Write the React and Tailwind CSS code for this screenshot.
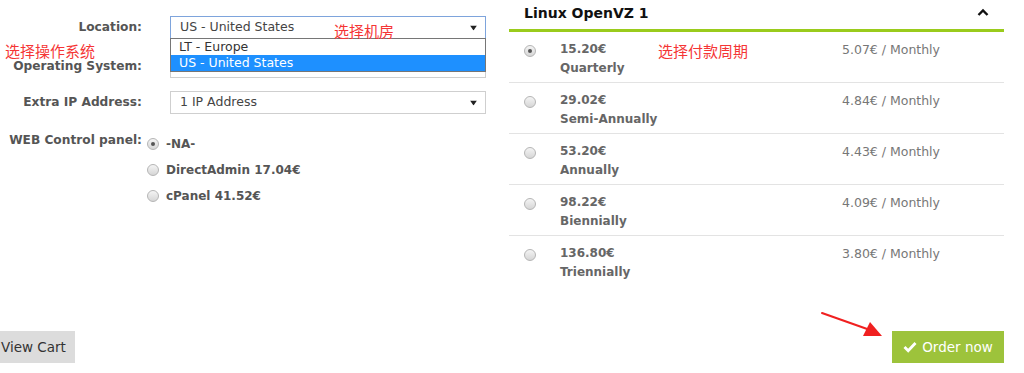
import React from 'react';

const cycles = [
  { price: '15.20€', name: 'Quarterly', monthly: '5.07€ / Monthly', checked: true },
  { price: '29.02€', name: 'Semi-Annually', monthly: '4.84€ / Monthly' },
  { price: '53.20€', name: 'Annually', monthly: '4.43€ / Monthly' },
  { price: '98.22€', name: 'Biennially', monthly: '4.09€ / Monthly' },
  { price: '136.80€', name: 'Triennially', monthly: '3.80€ / Monthly' },
];

const panels = [
  { label: '-NA-', checked: true },
  { label: 'DirectAdmin 17.04€' },
  { label: 'cPanel 41.52€' },
];

function Radio({ checked }) {
  return (
    <span className="flex items-center justify-center w-[12px] h-[12px] rounded-full border border-[#b5b5b5] bg-gradient-to-b from-[#f4f4f4] to-[#d6d6d6] shrink-0">
      {checked && <span className="w-[4px] h-[4px] rounded-full bg-[#555]" />}
    </span>
  );
}

function Caret() {
  return (
    <svg width="7" height="5" viewBox="0 0 7 5" className="absolute right-[8px] top-1/2 -translate-y-1/2">
      <path d="M0 0 H7 L3.5 5 Z" fill="#222" />
    </svg>
  );
}

function Select({ value, focused, children }) {
  return (
    <div className={`relative ml-[28px] w-[316px] h-[23px] bg-white border ${focused ? 'border-[#7ea4dc]' : 'border-[#cfcfcf]'} text-[12.5px] text-[#444] pl-[9px] flex items-center`}>
      {value}
      <Caret />
      {children}
    </div>
  );
}

function Label({ children }) {
  return <div className="w-[142px] text-right font-bold text-[12.2px] text-[#555]">{children}</div>;
}

const cjk = { fontFamily: '"Noto Sans CJK SC", sans-serif' };

export default function App() {
  return (
    <div className="relative w-[1024px] h-[373px] overflow-hidden bg-white" style={{ fontFamily: '"DejaVu Sans", Verdana, sans-serif' }}>
      <div className="flex h-[331px]">
        {/* left: configuration */}
        <div className="w-[495px] pt-[16px]">
          <div className="flex items-center relative z-10">
            <Label>Location:</Label>
            <Select value="US - United States" focused>
              <div className="absolute left-[-1px] top-[21px] w-[316px] bg-white border border-[#767676] text-[12.5px] leading-[16px]">
                <div className="pl-[8px] text-[#333]">LT - Europe</div>
                <div className="pl-[8px] bg-[#1e90ff] text-white">US - United States</div>
              </div>
            </Select>
          </div>
          <div className="flex items-center mt-[16px]">
            <Label>Operating System:</Label>
            <Select value="" />
          </div>
          <div className="flex items-center mt-[13px]">
            <Label>Extra IP Address:</Label>
            <Select value="1 IP Address" />
          </div>
          <div className="flex mt-[17px]">
            <Label>WEB Control panel:</Label>
            <div className="ml-[5px] pt-[5px] flex flex-col gap-[11px]">
              {panels.map((p) => (
                <div key={p.label} className="flex items-center h-[15px]">
                  <Radio checked={p.checked} />
                  <span className="ml-[7px] font-bold text-[12px] text-[#555]">{p.label}</span>
                </div>
              ))}
            </div>
          </div>
        </div>

        {/* right: billing cycle */}
        <div className="ml-[14px] w-[495px]">
          <div className="flex justify-between h-[32px] pl-[15px] pr-[15px] pt-[3px] border-b-[3px] border-[#9acb1c]">
            <span className="font-bold text-[14px] text-[#111]">Linux OpenVZ 1</span>
            <svg width="12" height="9" viewBox="0 0 12 9" className="mt-[5px]">
              <path d="M1.5 7 L6 2.5 L10.5 7" fill="none" stroke="#111" strokeWidth="2.4" />
            </svg>
          </div>
          {cycles.map((c, i) => (
            <div key={c.name} className={`flex h-[51px] pt-[8px] ${i < cycles.length - 1 ? 'border-b border-[#e3e3e3]' : ''}`}>
              <div className="pl-[15px] pt-[5px] w-[51px]">
                <Radio checked={c.checked} />
              </div>
              <div className="w-[282px] font-bold text-[12px] text-[#666] leading-[19px]">
                <div>{c.price}</div>
                <div>{c.name}</div>
              </div>
              <div className="text-[12.5px] text-[#777] leading-[19px]">{c.monthly}</div>
            </div>
          ))}
        </div>
      </div>

      <div className="flex justify-between pr-[20px]">
        <button className="h-[32px] w-[75px] bg-[#dcdcdc] text-[13.5px] text-[#333] pl-[1px] text-left">View Cart</button>
        <button className="h-[32px] w-[112px] bg-[#9dc33b] text-[13.5px] text-white flex items-center justify-center gap-[5px]">
          <svg width="14" height="12" viewBox="0 0 14 12">
            <path d="M1.5 6 L5.2 9.8 L12.5 2" fill="none" stroke="#fff" strokeWidth="2.8" />
          </svg>
          Order now
        </button>
      </div>

      {/* annotations */}
      <span className="absolute z-20 left-[334px] top-[20px] text-[15px] text-[#f53535]" style={cjk}>选择机房</span>
      <span className="absolute z-20 left-[5px] top-[40px] text-[15px] text-[#f53535]" style={cjk}>选择操作系统</span>
      <span className="absolute z-20 left-[658px] top-[40px] text-[15px] text-[#f53535]" style={cjk}>选择付款周期</span>
      <svg className="absolute z-20 left-[818px] top-[308px]" width="70" height="34" viewBox="0 0 70 34">
        <path d="M4 5 L52 22" stroke="#f02020" strokeWidth="2" strokeLinecap="round" />
        <path d="M64 28 L45 28 L52 14 Z" fill="#f02020" />
      </svg>
    </div>
  );
}
